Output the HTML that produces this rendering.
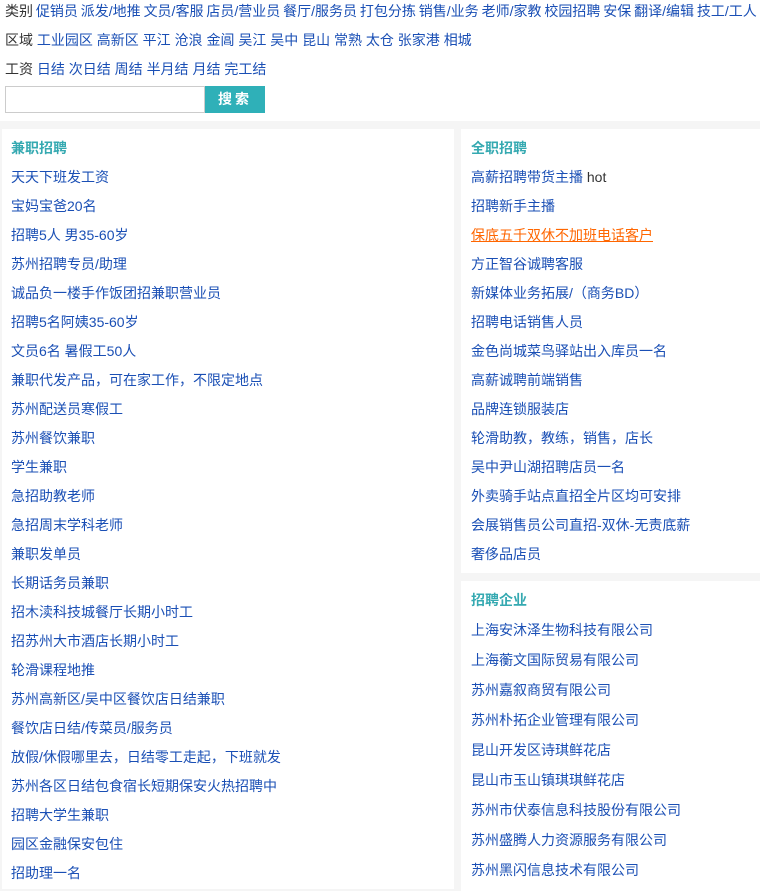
<!DOCTYPE html>
<html><head><meta charset="utf-8"><style>
*{margin:0;padding:0;box-sizing:border-box}
body{width:760px;height:884px;overflow:hidden;background:#f5f5f5;font-family:"Liberation Sans","Noto Sans CJK SC",sans-serif;font-size:14px;color:#333}
a{color:#1a4fb5;text-decoration:none}
.top{background:#fff;height:121px;position:relative;padding-left:5px}
.row{height:29px;line-height:22px;white-space:nowrap}
.r1{word-spacing:-1px}
.srch{position:absolute;left:5px;top:86px;display:flex}
.srch .in{width:200px;height:27px;border:1px solid #ccc;background:#fff}
.srch .bt{width:60px;height:27px;background:#2fb0b8;color:#fff;font-weight:bold;text-align:center;line-height:27px;letter-spacing:3px}
.pan{position:absolute;background:#fff}
.pan h3{font-size:14px;color:#35a9b1;font-weight:bold;height:29px;line-height:29px;margin-top:5px}
.pan a{display:block;height:29px;line-height:29px;white-space:nowrap}
.co a{height:30px;line-height:30px}
</style></head><body>
<div class="top">
<div class="row r1">类别 <a>促销员</a> <a>派发/地推</a> <a>文员/客服</a> <a>店员/营业员</a> <a>餐厅/服务员</a> <a>打包分拣</a> <a>销售/业务</a> <a>老师/家教</a> <a>校园招聘</a> <a>安保</a> <a>翻译/编辑</a> <a>技工/工人</a></div>
<div class="row">区域 <a>工业园区</a> <a>高新区</a> <a>平江</a> <a>沧浪</a> <a>金阊</a> <a>吴江</a> <a>吴中</a> <a>昆山</a> <a>常熟</a> <a>太仓</a> <a>张家港</a> <a>相城</a></div>
<div class="row">工资 <a>日结</a> <a>次日结</a> <a>周结</a> <a>半月结</a> <a>月结</a> <a>完工结</a></div>
<div class="srch"><div class="in"></div><div class="bt">搜索</div></div>
</div>
<div class="pan" style="left:2px;top:129px;width:452px;height:760px;padding-left:9px">
<h3>兼职招聘</h3>
<a>天天下班发工资</a><a>宝妈宝爸20名</a><a>招聘5人 男35-60岁</a><a>苏州招聘专员/助理</a><a>诚品负一楼手作饭团招兼职营业员</a><a>招聘5名阿姨35-60岁</a><a>文员6名 暑假工50人</a><a>兼职代发产品，可在家工作，不限定地点</a><a>苏州配送员寒假工</a><a>苏州餐饮兼职</a><a>学生兼职</a><a>急招助教老师</a><a>急招周末学科老师</a><a>兼职发单员</a><a>长期话务员兼职</a><a>招木渎科技城餐厅长期小时工</a><a>招苏州大市酒店长期小时工</a><a>轮滑课程地推</a><a>苏州高新区/吴中区餐饮店日结兼职</a><a>餐饮店日结/传菜员/服务员</a><a>放假/休假哪里去，日结零工走起，下班就发</a><a>苏州各区日结包食宿长短期保安火热招聘中</a><a>招聘大学生兼职</a><a>园区金融保安包住</a><a>招助理一名</a>
</div>
<div class="pan" style="left:461px;top:129px;width:299px;height:444px;padding-left:10px">
<h3>全职招聘</h3>
<a>高薪招聘带货主播 <span style="color:#333">hot</span></a><a>招聘新手主播</a><a style="color:#f60;text-decoration:underline">保底五千双休不加班电话客户</a><a>方正智谷诚聘客服</a><a>新媒体业务拓展/（商务BD）</a><a>招聘电话销售人员</a><a>金色尚城菜鸟驿站出入库员一名</a><a>高薪诚聘前端销售</a><a>品牌连锁服装店</a><a>轮滑助教，教练，销售，店长</a><a>吴中尹山湖招聘店员一名</a><a>外卖骑手站点直招全片区均可安排</a><a>会展销售员公司直招-双休-无责底薪</a><a>奢侈品店员</a>
</div>
<div class="pan co" style="left:461px;top:581px;width:299px;height:310px;padding-left:10px">
<h3>招聘企业</h3>
<a>上海安沐泽生物科技有限公司</a><a>上海蘅文国际贸易有限公司</a><a>苏州嘉叙商贸有限公司</a><a>苏州朴拓企业管理有限公司</a><a>昆山开发区诗琪鲜花店</a><a>昆山市玉山镇琪琪鲜花店</a><a>苏州市伏泰信息科技股份有限公司</a><a>苏州盛腾人力资源服务有限公司</a><a>苏州黑闪信息技术有限公司</a>
</div>
</body></html>
